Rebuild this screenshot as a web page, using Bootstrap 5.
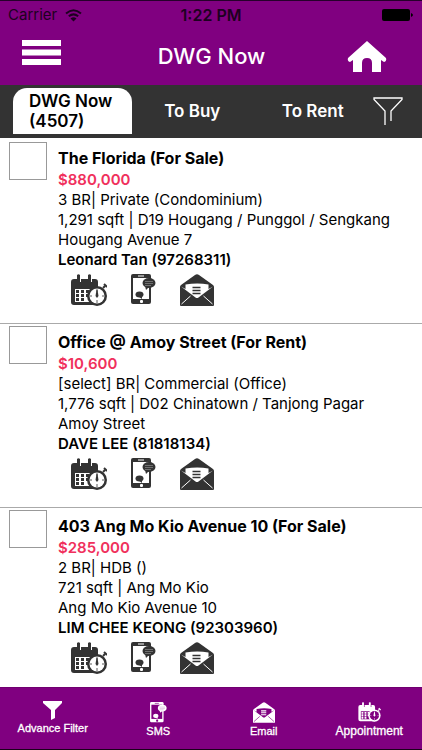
<!DOCTYPE html>
<html lang="en">
<head>
<meta charset="utf-8">
<meta name="viewport" content="width=device-width, initial-scale=1">
<title>DWG Now</title>
<link href="https://cdn.jsdelivr.net/npm/bootstrap@5.3.0/dist/css/bootstrap.min.css" rel="stylesheet">
<style>
body { font-family: Inter, "Liberation Sans", sans-serif; color: #000; background: #fff; }
.purple { background: #800080; }
.topbar { border-top: 1px solid #26002b; }
.status { height: 28px; font-size: 15px; line-height: 28px; color: #1d0020; }
.status .clock { font-size: 16px; font-weight: 600; }
.titlebar { height: 56px; padding: 0 35px 2px 22px; }
.titlebar h1 { font-size: 22px; line-height: 28px; font-weight: 500; padding-left: 14px; }
.side { width: 40px; }
.tabs { background: #333; height: 53px; padding: 3px 19px 4px 13px; }
.tabs .nav-link { color: #fff; font-size: 17px; line-height: 20px; font-weight: 600; padding: 3px 0; border: 0; border-radius: 14px 14px 0 0; text-align: center; }
.tabs .nav-link.active { background: #fff; color: #000; width: 119px; flex: none; text-align: left; padding: 3px 16px; }
main { padding-top: 2px; }
.listing { padding: 2px 10px 15px 9px; border-bottom: 1px solid #aaa; gap: 11px; }
.listing:last-child { border-bottom: 0; padding-bottom: 6px; }
.listing .form-check-input { width: 38px; height: 38px; border: 1px solid #999; border-radius: 0; margin: 0; flex: none; }
.info { padding-top: 5px; font-size: 15px; line-height: 20px; }
.info h2 { font-size: 16px; line-height: 22px; font-weight: 700; margin: 0 0 1px; }
.price { color: #f0305c; font-weight: 600; }
.agent { font-weight: 600; }
.acts { padding: 4px 0 0 13px; color: #333; --cut: #fff; gap: 24px; }
.foot { height: 63px; border-top: 1px solid #700070; border-bottom: 1px solid #1a001a; --cut: #800080; }
.foot .btn { color: #fff; font: 11px/16px "Liberation Sans", Arial, sans-serif; -webkit-text-stroke: 0.3px #fff; }
.foot .btn:last-child { font-size: 12px; }
.foot svg { display: block; margin: 0 auto; }
svg { display: block; }
.plain { background: none; border: 0; padding: 0; color: #fff; }
</style>
<script src="https://cdn.jsdelivr.net/npm/bootstrap@5.3.0/dist/js/bootstrap.bundle.min.js"></script>
</head>
<body class="d-flex flex-column min-vh-100">
<svg class="d-none" aria-hidden="true">
  <symbol id="calendar" viewBox="0 0 36 34">
    <path fill="currentColor" d="M3 5h3V1q1.500-1.500 3 0v7h1V5h7V1q1.500-1.500 3 0v7h1V5h3q3 0 3 3v23H3q-3 0-3-3V8q0-3 3-3z"/>
    <path fill="var(--cut)" d="M4 15h19v13H4z"/>
    <path fill="currentColor" d="M5 16h3v3H5zM10 16h3v3h-3zM15 16h3v3h-3zM5 20h3v3H5zM10 20h3v3h-3zM15 20h3v3h-3zM5 24h3v3H5zM10 24h3v3h-3z"/>
    <circle cx="26" cy="22" r="10" fill="currentColor"/>
    <path d="M32 14l2-2" stroke="currentColor" stroke-width="2"/>
    <path d="M33 10l3 3" stroke="currentColor" stroke-width="2"/>
    <circle cx="26" cy="22" r="7.500" fill="var(--cut)"/>
    <path d="M26 15v3M26 26v3M19 22h2M31 22h2" stroke="currentColor" stroke-width=".8"/>
    <path fill="currentColor" d="M25.500 16h1l1 6-1.500 2-1.500-2z"/>
  </symbol>
  <symbol id="phone" viewBox="0 0 25 31">
    <rect width="20" height="30" rx="2" fill="currentColor"/>
    <path fill="var(--cut)" d="M2 4h16v21H2z"/>
    <path d="M7 2h6" stroke="var(--cut)"/>
    <rect x="9" y="26" width="3" height="3" rx="1" fill="var(--cut)"/>
    <ellipse cx="18" cy="9" rx="6.500" ry="5" fill="currentColor"/>
    <path fill="currentColor" d="M14 12h5l-4 4z"/>
    <path d="M14 7.500h8M14 9.500h8M14 11.500h6" stroke="var(--cut)" stroke-width=".3"/>
    <ellipse cx="8.500" cy="20.500" rx="4" ry="3" fill="currentColor"/>
    <path fill="currentColor" d="M7 22h4v3z"/>
  </symbol>
  <symbol id="mail" viewBox="0 0 34 32">
    <path fill="currentColor" d="M15 1q2-1.500 4 0l14 10q1 1 1 2v18q0 1-1 1H1q-1 0-1-1V13q0-1 1-2z"/>
    <path fill="var(--cut)" d="M5.500 10.500q12-2 23 0v4.500l4.500-2.500L18.500 23.500q-1.500 1-3 0L1 12.500l4.500 2.500z"/>
    <path d="M12.500 13.500h8M12.500 16.500h8M12.500 19.500h8" stroke="currentColor" stroke-width="1.700"/>
    <path d="M1.500 30l9-8M32.500 30l-9-8" stroke="var(--cut)" stroke-width="1"/>
  </symbol>
</svg>

<header class="purple topbar">
  <div class="status d-flex align-items-center px-2">
    <div class="col d-flex align-items-center gap-2"><span>Carrier</span>
      <svg width="17" height="13" viewBox="0 0 17 13" fill="none" stroke="currentColor" stroke-width="2"><path d="M1 4.500q7.500-6.500 15 0M3.800 7.300q4.700-3.800 9.400 0"/><path d="M5.500 9.500q3-2.500 6 0L8.500 12.500z" fill="currentColor" stroke="none"/></svg>
    </div>
    <div class="clock">1:22 PM</div>
    <div class="col d-flex justify-content-end"><svg width="32" height="12" viewBox="0 0 32 12"><rect width="28" height="12" rx="2"/><path d="M29 4q4 2 0 4z"/></svg></div>
  </div>
  <div class="titlebar d-flex align-items-center justify-content-between">
    <button class="plain side" aria-label="Menu"><svg class="mb-2" width="39" height="25" viewBox="0 0 39 25" fill="#fff"><path d="M0 0h39v6H0zM0 9.500h39v6H0zM0 19h39v6H0z"/></svg></button>
    <h1 class="mb-0 text-white">DWG Now</h1>
    <button class="plain side" aria-label="Home"><svg width="40" height="31" viewBox="0 0 40 31" fill="#fff"><path d="M20 0l19 17q1 3-2 4l-3-2v12h-9v-9q0-5-5-5t-5 5v9H6V19l-3 2q-3-1-2-4z"/></svg></button>
  </div>
</header>

<nav class="tabs nav d-flex align-items-center flex-nowrap" aria-label="Listings">
  <a class="nav-link active align-self-stretch" aria-current="page" href="#all">DWG Now (4507)</a>
  <a class="nav-link col" href="#buy">To Buy</a>
  <a class="nav-link col" href="#rent">To Rent</a>
  <button class="plain" aria-label="Filter"><svg width="30" height="29" viewBox="0 0 30 29" fill="none" stroke="#fff" stroke-width="1.300"><path d="M12 28V14L1 2.500V1h28v1.500L18 14v10"/></svg></button>
</nav>

<main class="flex-grow-1">
  <article class="listing d-flex">
    <input class="form-check-input" type="checkbox" aria-label="Select The Florida">
    <div class="info">
      <h2>The Florida (For Sale)</h2>
      <div class="price">$880,000</div>
      <div>3 BR| Private (Condominium)</div>
      <div>1,291 sqft | D19 Hougang / Punggol / Sengkang</div>
      <div>Hougang Avenue 7</div>
      <div class="agent">Leonard Tan (97268311)</div>
      <div class="acts d-flex align-items-start">
        <button class="plain text-reset" aria-label="Appointment"><svg width="36" height="34"><use href="#calendar"/></svg></button>
        <button class="plain text-reset" aria-label="SMS"><svg width="25" height="31"><use href="#phone"/></svg></button>
        <button class="plain text-reset" aria-label="Email"><svg width="34" height="32"><use href="#mail"/></svg></button>
      </div>
    </div>
  </article>
  <article class="listing d-flex">
    <input class="form-check-input" type="checkbox" aria-label="Select Office @ Amoy Street">
    <div class="info">
      <h2>Office @ Amoy Street (For Rent)</h2>
      <div class="price">$10,600</div>
      <div>[select] BR| Commercial (Office)</div>
      <div>1,776 sqft | D02 Chinatown / Tanjong Pagar</div>
      <div>Amoy Street</div>
      <div class="agent">DAVE LEE (81818134)</div>
      <div class="acts d-flex align-items-start">
        <button class="plain text-reset" aria-label="Appointment"><svg width="36" height="34"><use href="#calendar"/></svg></button>
        <button class="plain text-reset" aria-label="SMS"><svg width="25" height="31"><use href="#phone"/></svg></button>
        <button class="plain text-reset" aria-label="Email"><svg width="34" height="32"><use href="#mail"/></svg></button>
      </div>
    </div>
  </article>
  <article class="listing d-flex">
    <input class="form-check-input" type="checkbox" aria-label="Select 403 Ang Mo Kio Avenue 10">
    <div class="info">
      <h2>403 Ang Mo Kio Avenue 10 (For Sale)</h2>
      <div class="price">$285,000</div>
      <div>2 BR| HDB ()</div>
      <div>721 sqft | Ang Mo Kio</div>
      <div>Ang Mo Kio Avenue 10</div>
      <div class="agent">LIM CHEE KEONG (92303960)</div>
      <div class="acts d-flex align-items-start">
        <button class="plain text-reset" aria-label="Appointment"><svg width="36" height="34"><use href="#calendar"/></svg></button>
        <button class="plain text-reset" aria-label="SMS"><svg width="25" height="31"><use href="#phone"/></svg></button>
        <button class="plain text-reset" aria-label="Email"><svg width="34" height="32"><use href="#mail"/></svg></button>
      </div>
    </div>
  </article>
</main>

<footer class="foot purple d-flex align-items-center">
  <button class="btn col border-0 p-0"><svg width="19" height="19" viewBox="0 0 19 19" fill="#fff"><path d="M0 0h19v2l-7 7v8l-4 2V9L0 2z"/></svg>Advance Filter</button>
  <button class="btn col border-0 p-0 pt-1"><svg width="17" height="21"><use href="#phone"/></svg>SMS</button>
  <button class="btn col border-0 p-0 pt-1"><svg width="22" height="21"><use href="#mail"/></svg>Email</button>
  <button class="btn col border-0 p-0 pt-1"><svg width="25" height="21"><use href="#calendar"/></svg>Appointment</button>
</footer>
</body>
</html>
